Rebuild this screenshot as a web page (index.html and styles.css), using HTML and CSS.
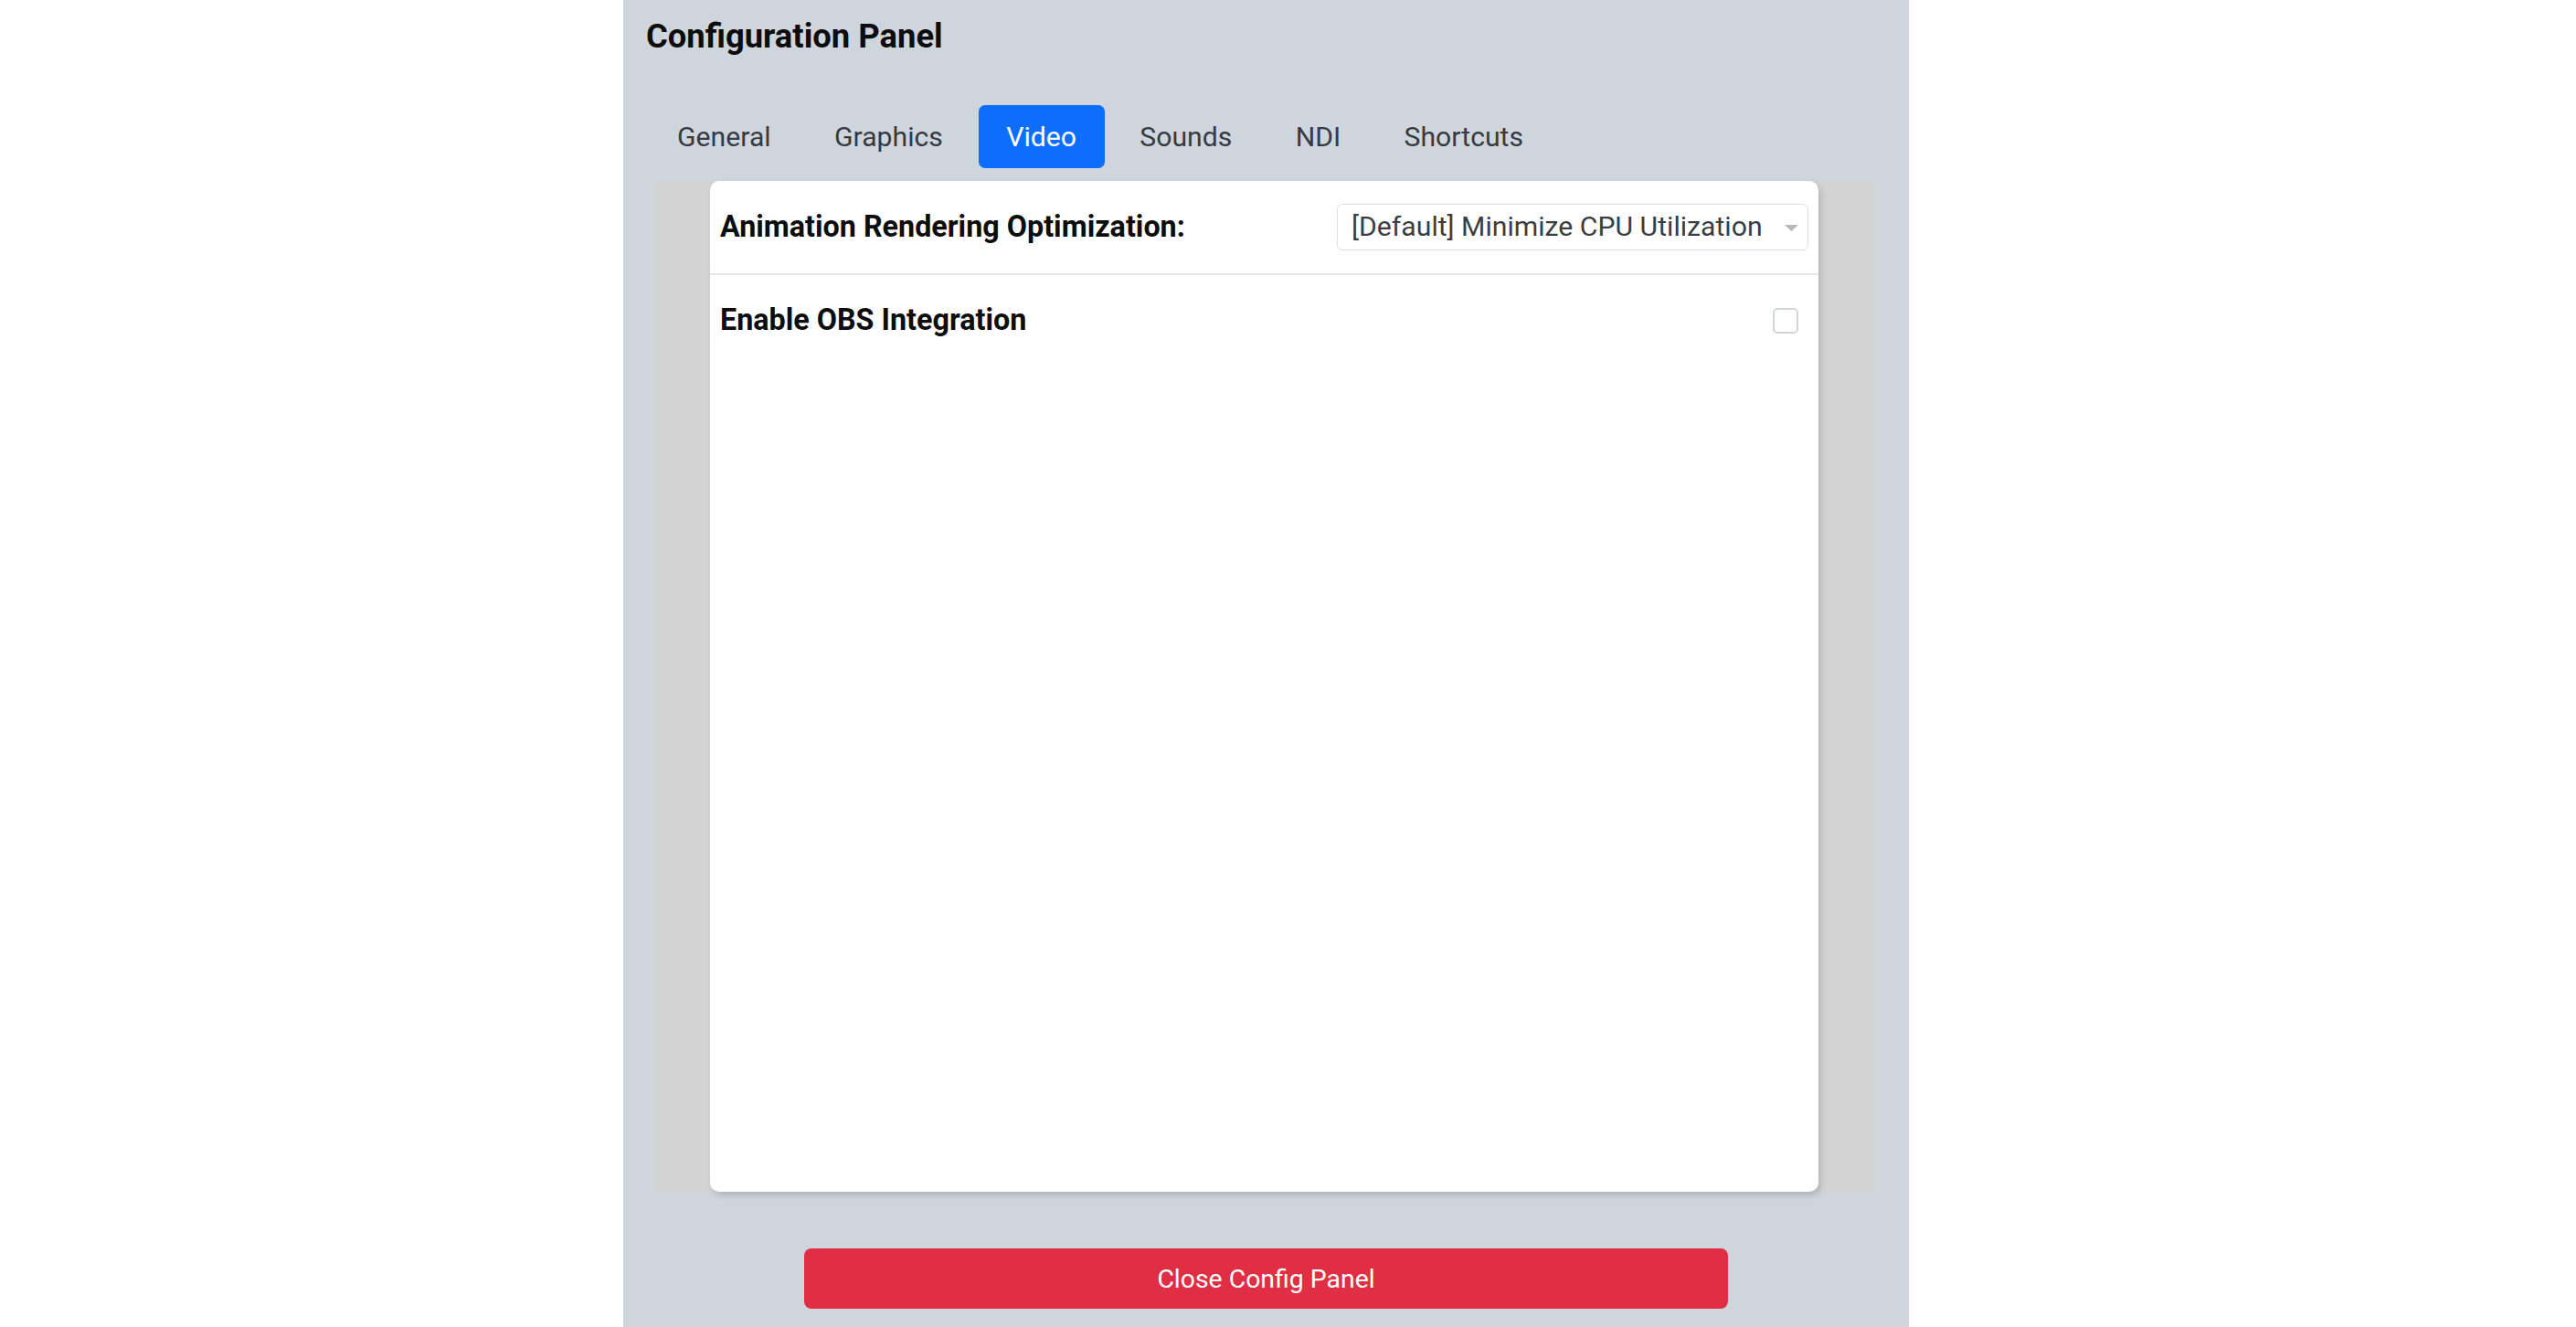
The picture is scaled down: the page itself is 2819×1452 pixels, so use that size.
FILE: index.html
```html
<!DOCTYPE html>
<html lang="en">
<head>
<meta charset="utf-8">
<title>Configuration Panel</title>
<link rel="stylesheet" href="styles.css">
</head>
<body>
<div class="panel">
  <h1 class="title">Configuration Panel</h1>
  <nav class="tabs">
    <a class="tab">General</a>
    <a class="tab">Graphics</a>
    <a class="tab active">Video</a>
    <a class="tab">Sounds</a>
    <a class="tab">NDI</a>
    <a class="tab">Shortcuts</a>
  </nav>
  <div class="content">
    <div class="card">
      <div class="row">
        <label class="label">Animation Rendering Optimization:</label>
        <div class="select">
          <span class="select-text">[Default] Minimize CPU Utilization</span>
          <svg class="select-arrow" width="15" height="7" viewBox="0 0 15 7"><path d="M0 0 L15 0 L7.5 7 Z" fill="#b4b9bf"/></svg>
        </div>
      </div>
      <div class="row second">
        <label class="label">Enable OBS Integration</label>
        <input type="checkbox" class="check">
      </div>
    </div>
  </div>
  <div class="footer">
    <button class="close-btn">Close Config Panel</button>
  </div>
</div>
</body>
</html>
```

FILE: styles.css
```css
html, body {
  margin: 0;
  padding: 0;
  background: #ffffff;
}

body {
  font-family: Roboto, "Noto Sans", "Liberation Sans", sans-serif;
}

.panel {
  width: 1407px;
  height: 1452px;
  margin-left: 682px;
  background: #cfd5dd;
  display: flex;
  flex-direction: column;
  box-sizing: border-box;
}

.title {
  margin: 18px 0 0 25px;
  font-size: 36.4px;
  line-height: 43px;
  font-weight: 700;
  color: #0d0d0d;
}

.tabs {
  display: flex;
  gap: 8.3px;
  margin: 54px 0 0 28.5px;
}

.tab {
  display: block;
  height: 69px;
  line-height: 69px;
  padding: 0 30.5px;
  font-size: 30.2px;
  color: #363b41;
  border-radius: 7px;
  cursor: pointer;
}

.tab.active {
  background: #0d6efd;
  color: #ffffff;
}

.content {
  margin: 14px 39px 0 35px;
  height: 1106px;
  background: #d3d3d3;
  padding: 0 60px;
}

.card {
  height: 100%;
  background: #ffffff;
  border-radius: 10px;
  box-shadow: 3px 4px 7px rgba(0, 0, 0, 0.14);
}

.row {
  height: 101px;
  display: flex;
  align-items: center;
  justify-content: space-between;
  padding: 0 11px 0 11px;
  border-bottom: 2px solid #e4e7eb;
}

.row.second {
  border-bottom: none;
  height: 100px;
}

.label {
  font-size: 32.3px;
  font-weight: 700;
  color: #0d0d0d;
  margin-top: -2px;
}

.select {
  width: 516px;
  height: 51px;
  box-sizing: border-box;
  border: 1.5px solid #dcdfe3;
  border-radius: 6px;
  display: flex;
  align-items: center;
  justify-content: space-between;
  padding: 0 10px 0 15px;
}

.select-text {
  font-size: 30.2px;
  color: #3a3d41;
  margin-top: -2px;
}

.select-arrow {
  display: block;
  margin-top: 2px;
}

.check {
  appearance: none;
  -webkit-appearance: none;
  width: 28px;
  height: 28px;
  margin: 0 11px 0 0;
  box-sizing: border-box;
  border: 2px solid #d2d5d9;
  border-radius: 5px;
  background: #ffffff;
}

.footer {
  display: flex;
  justify-content: center;
  padding-top: 62px;
}

.close-btn {
  width: 1011px;
  height: 66px;
  border: none;
  border-radius: 8px;
  background: #e02e45;
  color: #ffffff;
  font-family: Roboto, "Noto Sans", "Liberation Sans", sans-serif;
  font-size: 28.4px;
  cursor: pointer;
}
```
